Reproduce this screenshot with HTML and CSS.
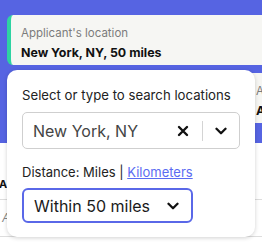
FILE: index.html
```html
<!DOCTYPE html>
<html>
<head>
<meta charset="utf-8">
<link rel="stylesheet" href="styles.css">
</head>
<body>
<div class="page">
  <div class="header">
    <div class="chip chip-main">
      <div class="chip-label">Applicant's location</div>
      <div class="chip-value">New York, NY, 50 miles</div>
    </div>
    <div class="chip chip-second">
      <div class="chip-label">Applied</div>
      <div class="chip-value">Any time</div>
    </div>
  </div>
  <div class="table">
    <div class="thead">APPLICANT</div>
    <div class="row"><span class="row-text">Anna</span></div>
    <div class="row"></div>
  </div>

  <div class="popup">
    <div class="popup-title">Select or type to search locations</div>
    <div class="select">
      <span class="select-value">New York, NY</span>
      <span class="icon-btn clear">
        <svg width="12" height="12" viewBox="0 0 12 12"><path d="M2 2 L10 10 M10 2 L2 10" stroke="#111" stroke-width="2.4" stroke-linecap="round"/></svg>
      </span>
      <span class="divider"></span>
      <span class="icon-btn chevron">
        <svg width="12" height="8" viewBox="0 0 12 8"><path d="M1.5 1.8 L6 6.2 L10.5 1.8" fill="none" stroke="#111" stroke-width="2.3" stroke-linecap="round" stroke-linejoin="round"/></svg>
      </span>
    </div>
    <div class="distance">Distance: Miles <span class="sep">|</span> <a class="link" href="#">Kilometers</a></div>
    <div class="select select-radius">
      <span class="select-value dark">Within 50 miles</span>
      <span class="icon-btn chevron">
        <svg width="12" height="8" viewBox="0 0 12 8"><path d="M1.5 1.8 L6 6.2 L10.5 1.8" fill="none" stroke="#111" stroke-width="2.3" stroke-linecap="round" stroke-linejoin="round"/></svg>
      </span>
    </div>
  </div>
</div>
</body>
</html>
```

FILE: styles.css
```css
* { box-sizing: border-box; }
html, body { margin: 0; padding: 0; }
body {
  width: 262px;
  height: 249px;
  overflow: hidden;
  background: #fff;
  font-family: Inter, "Noto Sans", sans-serif;
  color: #1a1a1a;
}
.page { position: relative; width: 262px; height: 249px; overflow: hidden; }

.header {
  background: #5664e2;
  height: 143px;
  padding: 15px 0 0 7px;
  display: flex;
  flex-direction: column;
  gap: 8px;
}
.chip {
  background: #f6f6f3;
  border-left: 4px solid #2ed3a2;
  border-radius: 6px;
  height: 50px;
  padding: 10px 0 0 10px;
  white-space: nowrap;
}
.chip-main { width: 300px; }
.chip-second { width: 200px; margin-left: 235px; }
.chip-label { font-size: 11.5px; color: #7c7c7c; line-height: 16px; }
.chip-value { font-size: 12.4px; font-weight: 700; color: #111; line-height: 18px; margin-top: 3px; }

.table { padding-top: 34px; }
.thead {
  font-size: 11px;
  font-weight: 700;
  color: #111;
  margin-left: -1px;
  height: 23px;
  border-bottom: 1px solid #ddd;
}
.row {
  height: 37px;
  border-bottom: 1px solid #ddd;
  padding: 6px 0 0 2px;
}
.row-text { font-size: 12px; color: #888; font-style: italic; }

.popup {
  position: absolute;
  top: 70px;
  left: 7px;
  width: 248px;
  height: 167px;
  background: #fff;
  border-radius: 10px;
  box-shadow: 0 1px 4px rgba(0,0,0,0.18);
  padding: 17px 15px 0 15px;
}
.popup-title { font-size: 13.2px; color: #222; line-height: 16px; white-space: nowrap; }
.select {
  margin-top: 9px;
  width: 218px;
  height: 37px;
  border: 1px solid #cfcfcf;
  border-radius: 5px;
  display: flex;
  align-items: center;
  padding-left: 10px;
}
.select-value { flex: 1; font-size: 16px; color: #444; }
.select-value.dark { color: #1a1a1a; }
.icon-btn { display: flex; align-items: center; justify-content: center; }
.clear { width: 24px; margin-right: 7px; }
.divider { width: 1px; height: 20px; background: #d4d4d4; }
.select .chevron { width: 36px; }
.distance { margin-top: 16px; font-size: 13px; color: #222; line-height: 14px; white-space: nowrap; }
.sep { margin: 0; }
.link { color: #5b6cf2; text-decoration: underline; }
.select-radius {
  margin-top: 9px;
  width: 171px;
  height: 35px;
  border: 2px solid #5a68e8;
  border-radius: 6px;
  padding-left: 10px;
}
.select-radius .chevron { width: 36px; }
```
